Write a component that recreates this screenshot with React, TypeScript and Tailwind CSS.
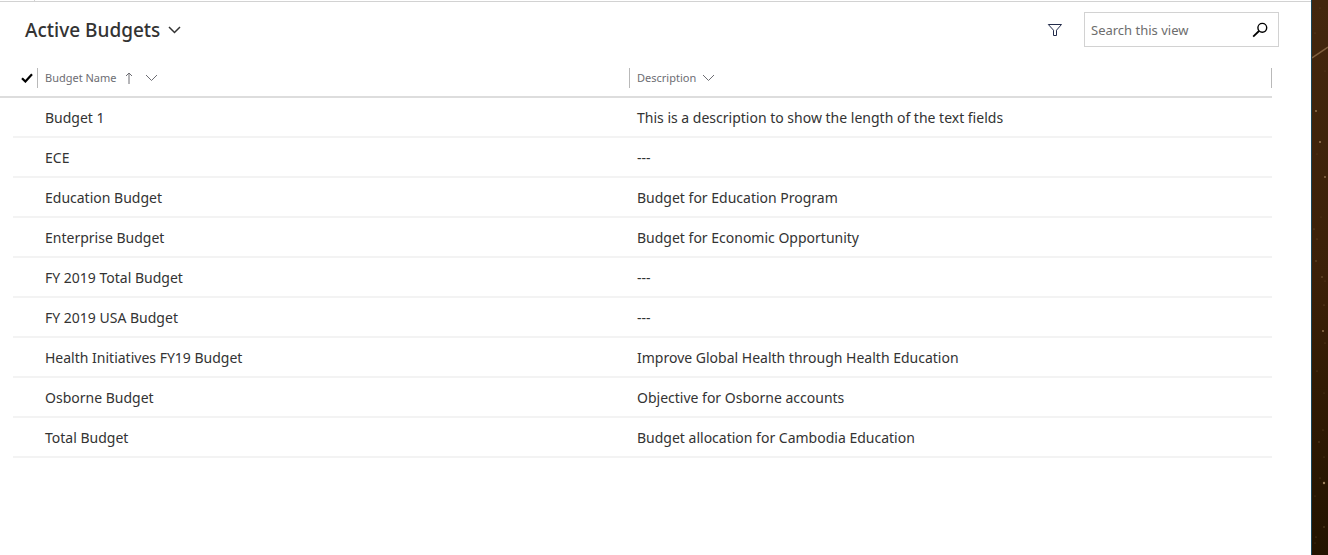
type Budget = {
  name: string;
  description?: string;
};

const budgets: Budget[] = [
  { name: "Budget 1", description: "This is a description to show the length of the text fields" },
  { name: "ECE" },
  { name: "Education Budget", description: "Budget for Education Program" },
  { name: "Enterprise Budget", description: "Budget for Economic Opportunity" },
  { name: "FY 2019 Total Budget" },
  { name: "FY 2019 USA Budget" },
  { name: "Health Initiatives FY19 Budget", description: "Improve Global Health through Health Education" },
  { name: "Osborne Budget", description: "Objective for Osborne accounts" },
  { name: "Total Budget", description: "Budget allocation for Cambodia Education" },
];

// x, y, radius, opacity
const specks = [
  [8, 8, 0.5, 0.25],
  [3, 33, 0.5, 0.3],
  [13, 71, 0.5, 0.25],
  [4, 111, 0.9, 0.6],
  [8, 142, 1, 0.6],
  [13, 177, 0.9, 0.55],
  [5, 154, 0.5, 0.25],
  [2, 229, 0.6, 0.4],
  [9, 217, 0.5, 0.25],
  [5, 239, 0.6, 0.35],
  [4, 261, 0.7, 0.4],
  [10, 277, 0.7, 0.5],
  [13, 281, 0.5, 0.3],
  [12, 305, 0.6, 0.4],
  [11, 331, 0.9, 0.6],
  [13, 343, 0.5, 0.35],
  [5, 371, 0.6, 0.3],
  [12, 393, 0.5, 0.3],
  [11, 430, 0.6, 0.35],
  [7, 442, 0.7, 0.35],
  [12, 457, 0.6, 0.3],
  [8, 478, 0.6, 0.35],
  [12, 483, 1.2, 0.65],
  [3, 496, 0.5, 0.3],
  [12, 527, 0.7, 0.4],
  [4, 537, 0.6, 0.35],
  [3, 543, 0.5, 0.3],
] as const;

function Chevron({ className }: { className?: string }) {
  return (
    <svg viewBox="0 0 13 8" fill="none" stroke="currentColor" className={className} aria-hidden="true">
      <path d="M1 1l5.5 5.5L12 1" />
    </svg>
  );
}

function Toolbar() {
  return (
    <header className="flex items-center justify-between pt-[10px] pr-8 pb-[13px] pl-[25px]">
      <h1 className="text-[19px] leading-6 font-medium">
        <button type="button" className="flex items-center gap-2 text-[#333333]">
          Active Budgets
          <Chevron className="h-2 w-[13px] stroke-[1.5]" />
        </button>
      </h1>

      <div className="flex items-center gap-[21px]">
        <button type="button" aria-label="Filter" className="text-[#222b4a]">
          <svg viewBox="0 0 16 14" fill="none" stroke="currentColor" className="h-[14px] w-4" aria-hidden="true">
            <path d="M1.3 1.5h13.2L9.5 7.2v5.3h-3V7.2z" />
          </svg>
        </button>
        <form role="search" className="flex h-[35px] w-[195px] items-center border border-[#d2d2d2] pr-[10px] pl-[6px]">
          <input
            type="text"
            aria-label="Search this view"
            placeholder="Search this view"
            className="min-w-0 flex-1 text-[13px] leading-5 text-[#333333] outline-none placeholder:text-[#6d6d6d]"
          />
          <button type="button" aria-label="Search" className="text-black">
            <svg viewBox="0 0 16 16" fill="none" stroke="currentColor" className="h-4 w-4" aria-hidden="true">
              <circle cx="10.3" cy="5.8" r="4.4" strokeWidth="1.4" />
              <path d="M7 9L1.2 14.6" strokeWidth="1.8" />
            </svg>
          </button>
        </form>
      </div>
    </header>
  );
}

function BudgetTable() {
  return (
    <div className="pr-[39px]">
      <table className="w-full table-fixed border-separate border-spacing-0 text-left">
        <colgroup>
          <col className="w-[13px]" />
          <col className="w-6" />
          <col className="w-[592px]" />
          <col />
        </colgroup>
        <thead>
          <tr className="h-[38px] text-[11px] text-[#6d6d73]">
            <th colSpan={2} className="border-b-2 border-[#dddddd] p-0">
              <button type="button" aria-label="Select all" className="ml-[21px] flex text-black">
                <svg viewBox="0 0 12 10" fill="none" stroke="currentColor" className="h-[10px] w-3" aria-hidden="true">
                  <path d="M1 5.2l3.4 3.3L11 1.2" strokeWidth="2.2" />
                </svg>
              </button>
            </th>
            <th aria-sort="ascending" className="border-b-2 border-[#dddddd] p-0 font-normal">
              <button type="button" className="flex h-5 items-center border-l border-[#b9b9b9] pl-[7px]">
                Budget Name
                <svg viewBox="0 0 8 12" fill="none" stroke="currentColor" className="ml-2 h-3 w-2" aria-hidden="true">
                  <path d="M4 12V1M1 4l3-3 3 3" />
                </svg>
                <Chevron className="ml-3 h-2 w-[13px]" />
              </button>
            </th>
            <th className="border-b-2 border-[#dddddd] p-0 font-normal">
              <div className="flex h-5 items-center border-x border-[#b9b9b9] pl-[7px]">
                <button type="button" className="flex items-center gap-[6px]">
                  Description
                  <Chevron className="h-2 w-[13px]" />
                </button>
              </div>
            </th>
          </tr>
        </thead>
        <tbody>
          {budgets.map((budget) => (
            <tr key={budget.name} className="h-10 text-sm text-[#333333]">
              <td className="p-0" />
              <td className="border-b-2 border-[#f3f3f3] p-0" />
              <td className="border-b-2 border-[#f3f3f3] pt-[2px] pr-4 pb-0 pl-2">{budget.name}</td>
              <td className="border-b-2 border-[#f3f3f3] pt-[2px] pr-4 pb-0 pl-2">{budget.description ?? "---"}</td>
            </tr>
          ))}
        </tbody>
      </table>
    </div>
  );
}

function Backdrop() {
  return (
    <aside className="w-[17px] shrink-0 overflow-hidden border-l border-[#17455a] bg-linear-to-b from-[#43270e] via-[#3b2008] to-[#221300]">
      <svg width="16" height="555" viewBox="0 0 16 555" fill="#d9b58a" aria-hidden="true">
        <path d="M0 58L16 47" stroke="#80603f" strokeWidth="1.5" />
        {specks.map(([x, y, r, opacity]) => (
          <circle key={y} cx={x} cy={y} r={r} opacity={opacity} />
        ))}
      </svg>
    </aside>
  );
}

export default function App() {
  return (
    <div className="flex min-h-screen bg-white font-['Noto_Sans','Open_Sans',sans-serif]">
      <main className="min-w-0 flex-1">
        <div className="flex h-[2px] border-b border-[#d2d2d2] pl-[34px]">
          <span className="w-px bg-[#d2d2d2]" />
        </div>
        <Toolbar />
        <BudgetTable />
      </main>
      <Backdrop />
    </div>
  );
}
